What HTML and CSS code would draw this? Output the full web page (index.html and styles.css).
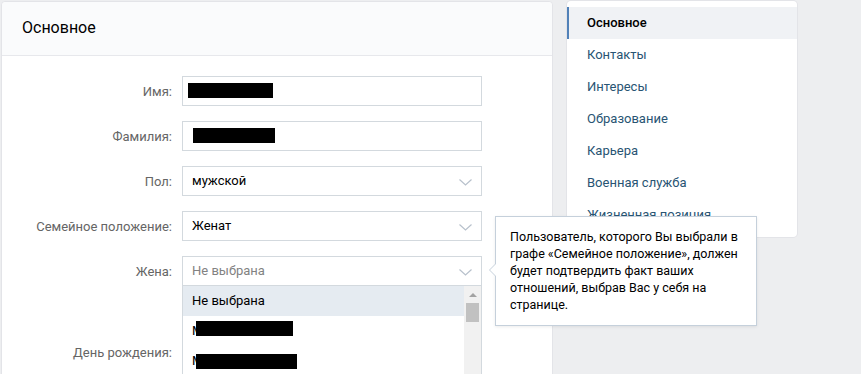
FILE: index.html
```html
<!DOCTYPE html>
<html lang="ru">
<head>
<meta charset="utf-8">
<title>Основное</title>
<link rel="stylesheet" href="styles.css">
</head>
<body>
<div class="page">
  <div class="main">
    <div class="header">Основное</div>
    <div class="form">
      <div class="row">
        <div class="label">Имя:</div>
        <div class="field"><span class="redact r-name"></span></div>
      </div>
      <div class="row">
        <div class="label">Фамилия:</div>
        <div class="field"><span class="redact r-surname"></span></div>
      </div>
      <div class="row">
        <div class="label">Пол:</div>
        <div class="field select">мужской
          <svg class="chev" width="13" height="7" viewBox="0 0 13 7"><polyline points="0.5,0.5 6.5,6 12.5,0.5" fill="none" stroke="#b8c1cc" stroke-width="1.2"/></svg>
        </div>
      </div>
      <div class="row">
        <div class="label">Семейное положение:</div>
        <div class="field select">Женат
          <svg class="chev" width="13" height="7" viewBox="0 0 13 7"><polyline points="0.5,0.5 6.5,6 12.5,0.5" fill="none" stroke="#b8c1cc" stroke-width="1.2"/></svg>
        </div>
      </div>
      <div class="row">
        <div class="label">Жена:</div>
        <div class="field select open"><span class="placeholder">Не выбрана</span>
          <svg class="chev" width="13" height="7" viewBox="0 0 13 7"><polyline points="0.5,0.5 6.5,6 12.5,0.5" fill="none" stroke="#b8c1cc" stroke-width="1.2"/></svg>
          <div class="dropdown">
            <div class="items">
              <div class="item active">Не выбрана</div>
              <div class="item">М<span class="redact r-item1"></span></div>
              <div class="item">М<span class="redact r-item2"></span></div>
            </div>
            <div class="scrollbar">
              <div class="sb-up"><span class="sb-arrow"></span></div>
              <div class="sb-thumb"></div>
            </div>
          </div>
          <div class="tooltip">Пользователь, которого Вы выбрали в<br>графе «Семейное положение», должен<br>будет подтвердить факт ваших<br>отношений, выбрав Вас у себя на<br>странице.</div>
        </div>
      </div>
      <div class="row row-birth">
        <div class="label">День рождения:</div>
        <div class="field"></div>
      </div>
    </div>
  </div>
  <div class="menu">
    <div class="menu-item active">Основное</div>
    <div class="menu-item">Контакты</div>
    <div class="menu-item">Интересы</div>
    <div class="menu-item">Образование</div>
    <div class="menu-item">Карьера</div>
    <div class="menu-item">Военная служба</div>
    <div class="menu-item">Жизненная позиция</div>
  </div>
</div>
</body>
</html>
```
FILE: styles.css
```css
html, body {
  margin: 0;
  padding: 0;
}
body {
  background: #edeef0;
  font-family: Roboto, "Open Sans", "Liberation Sans", Arial, sans-serif;
  font-size: 13px;
  height: 374px;
  overflow: hidden;
}
.page {
  display: flex;
  align-items: flex-start;
  padding: 1px 0 0 1px;
}
.main {
  width: 552px;
  height: 420px;
  box-sizing: border-box;
  background: #fff;
  border: 1px solid #e3e4e8;
  border-radius: 4px 4px 0 0;
  flex-shrink: 0;
}
.header {
  height: 53px;
  line-height: 52px;
  padding-left: 20px;
  background: #fafbfc;
  border-bottom: 1px solid #e7e8ec;
  border-radius: 4px 4px 0 0;
  font-size: 16px;
  color: #000;
}
.form {
  padding-top: 20px;
}
.row {
  display: flex;
  align-items: center;
  margin-bottom: 15px;
}
.row-birth {
  margin-top: 51px;
}
.label {
  width: 170px;
  margin-right: 10px;
  text-align: right;
  color: #656565;
  white-space: nowrap;
}
.field {
  position: relative;
  width: 300px;
  height: 30px;
  box-sizing: border-box;
  border: 1px solid #d3d9de;
  padding: 0 9px;
  line-height: 28px;
  color: #000;
  white-space: nowrap;
}
.placeholder {
  color: #828282;
}
.chev {
  position: absolute;
  right: 9px;
  top: 12px;
}
.redact {
  display: inline-block;
  background: #000;
  vertical-align: middle;
}
.r-name {
  width: 85px;
  height: 15px;
  margin-left: -4px;
  position: relative;
  top: -1px;
}
.r-surname {
  width: 82px;
  height: 15px;
  margin-left: 1px;
  position: relative;
  top: -1px;
}
.r-item1 {
  width: 97px;
  height: 15px;
  margin-left: -7px;
  position: relative;
  top: -3px;
}
.r-item2 {
  width: 101px;
  height: 15px;
  margin-left: -7px;
}
.dropdown {
  position: absolute;
  z-index: 5;
  left: -1px;
  top: 29px;
  width: 300px;
  height: 120px;
  box-sizing: border-box;
  border: 1px solid #d3d9de;
  border-top: none;
  background: #fff;
  display: flex;
}
.items {
  flex: 1;
}
.item {
  height: 30px;
  line-height: 30px;
  padding-left: 9px;
  color: #000;
  overflow: hidden;
}
.item.active {
  background: #e5ebf1;
}
.scrollbar {
  width: 17px;
  background: #f1f1f1;
}
.sb-up {
  height: 17px;
  display: flex;
  justify-content: center;
  align-items: center;
}
.sb-arrow {
  width: 0;
  height: 0;
  border-left: 4px solid transparent;
  border-right: 4px solid transparent;
  border-bottom: 4px solid #a3a3a3;
}
.sb-thumb {
  width: 13px;
  height: 19px;
  margin-left: 2px;
  background: #c1c1c1;
}
.tooltip {
  position: absolute;
  z-index: 10;
  left: 312px;
  top: -41px;
  width: 262px;
  box-sizing: border-box;
  padding: 11px 14px 12px;
  background: #fff;
  border: 1px solid #c5d0db;
  box-shadow: 0 1px 3px rgba(0, 0, 0, 0.08);
  font-size: 12.5px;
  line-height: 17px;
  color: #000;
  white-space: nowrap;
}
.tooltip::before,
.tooltip::after {
  content: "";
  position: absolute;
  top: 47px;
  width: 0;
  height: 0;
  border: 6px solid transparent;
}
.tooltip::before {
  left: -13px;
  border-right-color: #c5d0db;
}
.tooltip::after {
  left: -12px;
  border-right-color: #fff;
}
.menu {
  width: 230px;
  margin-left: 14px;
  flex-shrink: 0;
  box-sizing: border-box;
  padding: 6px 0;
  background: #fff;
  border-radius: 4px;
  box-shadow: 0 0 0 1px #e3e4e8;
}
.menu-item {
  height: 32px;
  line-height: 32px;
  padding-left: 20px;
  color: #285473;
  white-space: nowrap;
}
.menu-item.active {
  padding-left: 18px;
  border-left: 2px solid #5181b8;
  background: #f0f2f5;
  color: #000;
  font-weight: 500;
}
```
